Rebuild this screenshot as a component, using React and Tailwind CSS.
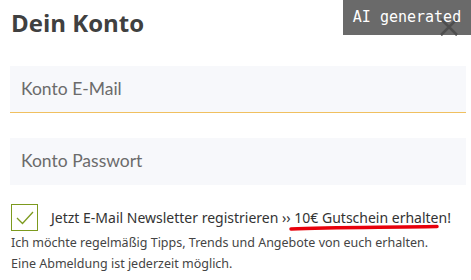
import React from "react";

export default function App() {
  return (
    <div className="relative w-[471px] h-[280px] bg-white overflow-hidden" style={{ fontFamily: '"Open Sans", sans-serif' }}>
      <div className="flex items-start justify-between pl-[11px] pr-[12px] pt-[8px] h-[42px]">
        <h1 className="text-[24px] font-bold text-[#404040] leading-[30px]">Dein Konto</h1>
        <svg width="20" height="20" viewBox="0 0 20 20" className="mt-[9px]">
          <path d="M2 2 L18 18 M18 2 L2 18" stroke="#1a1a1a" strokeWidth="2.5" />
        </svg>
      </div>
      <div className="absolute top-0 right-0 w-[128px] h-[35px] bg-[#555555]/[0.88] flex items-center justify-center text-white text-[15px]" style={{ fontFamily: '"DejaVu Sans Mono", monospace' }}>
        AI generated
      </div>
      <div className="flex flex-col gap-[25px] pl-[10px] pr-[5px] mt-[24px]">
        <div className="h-[47px] bg-[#f7f8fb] border-b-[1.5px] border-[#f0c060] flex items-center pl-[11px] text-[17.5px] text-[#6b6b6b]" style={{ fontFamily: 'Lato, "Open Sans", sans-serif' }}>
          Konto E-Mail
        </div>
        <div className="h-[47px] bg-[#f7f8fb] flex items-center pl-[11px] text-[17.5px] text-[#6b6b6b]" style={{ fontFamily: 'Lato, "Open Sans", sans-serif' }}>
          Konto Passwort
        </div>
      </div>
      <div className="pl-[11px] mt-[19px]" style={{ fontFamily: '"Noto Sans", sans-serif' }}>
        <div className="flex items-center gap-[13px]">
          <div className="w-[27px] h-[27px] border-[1.5px] border-[#7c9a1e] flex items-center justify-center">
            <svg width="20" height="16" viewBox="0 0 20 16">
              <path d="M2 8 L7.5 13.5 L18 2" fill="none" stroke="#7c9a1e" strokeWidth="1.3" />
            </svg>
          </div>
          <div className="relative text-[14px] text-[#333] leading-none">
            Jetzt E-Mail Newsletter registrieren ›› 10€ Gutschein erhalten!
            <svg className="absolute left-[238px] top-[13px]" width="155" height="8" viewBox="0 0 155 8">
              <path d="M2 5 C40 3, 90 3.5, 148 2.5" fill="none" stroke="#e8000b" strokeWidth="3.5" strokeLinecap="round" />
            </svg>
          </div>
        </div>
        <p className="text-[12.5px] text-[#444] mt-[1px] leading-[21px]">Ich möchte regelmäßig Tipps, Trends und Angebote von euch erhalten.</p>
        <p className="text-[12.5px] text-[#444] leading-[21px]">Eine Abmeldung ist jederzeit möglich.</p>
      </div>
    </div>
  );
}
